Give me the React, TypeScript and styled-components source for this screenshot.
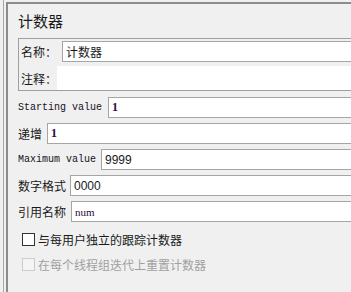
import styled, { createGlobalStyle } from "styled-components";

const GlobalStyle = createGlobalStyle`
    html, body {
        margin: 0;
        padding: 0;
        background: #f0f0f0;
        overflow: hidden;
    }
    body {
        font-family: "Liberation Sans", "Noto Sans CJK SC", sans-serif;
        font-size: 12px;
        color: #1a1a1a;
    }
`;

const Outer = styled.div`
    width: 351px;
    height: 292px;
    padding-left: 3px;
    box-sizing: border-box;
    overflow: hidden;
`;

const Frame = styled.div`
    height: 100%;
    border-left: 1px solid #a8a8a8;
    padding: 2px 0 0 2px;
    margin-right: -60px;
`;

const Panel = styled.div`
    height: 100%;
    box-sizing: border-box;
    border-left: 2px solid #8c8c8c;
    border-top: 2px solid #8c8c8c;
    padding: 0 0 0 10px;
    display: flex;
    flex-direction: column;
`;

const Title = styled.div`
    font-family: "Noto Sans CJK SC", sans-serif;
    font-size: 15px;
    line-height: 26px;
    margin: 4px 0 4px;
`;

const Group = styled.div`
    border: 1px solid #a0a0a0;
    padding: 1px 0 0 1px;
    display: flex;
    flex-direction: column;
    gap: 4px;
`;

const GroupRow = styled.div<{ $tall?: boolean }>`
    display: flex;
    align-items: center;
    height: ${(p) => (p.$tall ? "24px" : "22px")};
`;

const GroupLabel = styled.span`
    font-family: "Noto Sans CJK SC", sans-serif;
    width: 36px;
    padding-left: 1px;
    flex-shrink: 0;
`;

const Field = styled.div<{ $serif?: boolean; $small?: boolean; $gap?: number }>`
    flex: 1;
    height: 21px;
    box-sizing: border-box;
    background: #fff;
    border: 1px solid #a5a5a5;
    border-right: none;
    margin-left: ${(p) => p.$gap ?? 5}px;
    padding-left: 3px;
    display: flex;
    align-items: center;
    font-family: ${(p) => (p.$serif ? '"Liberation Serif", serif' : '"Liberation Sans", "Noto Sans CJK SC", sans-serif')};
    font-size: ${(p) => (p.$small ? "11px" : "12px")};
    font-weight: ${(p) => (p.$serif && !p.$small ? "bold" : "normal")};
    color: ${(p) => (p.$serif ? "#2a0a40" : "#1a1a1a")};
`;

const TextArea = styled.div`
    flex: 1;
    align-self: stretch;
    background: #fff;
`;

const Rows = styled.div`
    display: flex;
    flex-direction: column;
    gap: 5px;
    margin-top: 6px;
`;

const Row = styled.div`
    display: flex;
    align-items: center;
    height: 21px;
`;

const Label = styled.span<{ $mono?: boolean }>`
    font-family: ${(p) => (p.$mono ? '"Liberation Mono", monospace' : '"Noto Sans CJK SC", sans-serif')};
    font-size: ${(p) => (p.$mono ? "10px" : "12px")};
    color: ${(p) => (p.$mono ? "#14101e" : "#1a1a1a")};
    white-space: pre;
`;

const Checks = styled.div`
    display: flex;
    flex-direction: column;
    gap: 9px;
    margin-top: 9px;
    padding-left: 4px;
`;

const CheckRow = styled.label<{ $disabled?: boolean }>`
    display: flex;
    align-items: center;
    gap: 3px;
    height: 16px;
    font-family: "Noto Sans CJK SC", sans-serif;
    font-size: 12px;
    color: ${(p) => (p.$disabled ? "#a0a0a0" : "#1a1a1a")};
`;

const Box = styled.span<{ $disabled?: boolean }>`
    width: 13px;
    height: 13px;
    box-sizing: border-box;
    border: 1px solid ${(p) => (p.$disabled ? "#cccccc" : "#333333")};
    background: ${(p) => (p.$disabled ? "#f4f4f4" : "#ffffff")};
`;

export default function App() {
    return (
        <Outer>
            <GlobalStyle />
            <Frame>
                <Panel>
                    <Title>计数器</Title>
                    <Group>
                        <GroupRow>
                            <GroupLabel>名称：</GroupLabel>
                            <Field>计数器</Field>
                        </GroupRow>
                        <GroupRow $tall>
                            <GroupLabel>注释：</GroupLabel>
                            <TextArea />
                        </GroupRow>
                    </Group>
                    <Rows>
                        <Row>
                            <Label $mono>Starting value</Label>
                            <Field $serif $gap={6}>1</Field>
                        </Row>
                        <Row>
                            <Label>递增</Label>
                            <Field $serif>1</Field>
                        </Row>
                        <Row>
                            <Label $mono>Maximum value</Label>
                            <Field $gap={5}>9999</Field>
                        </Row>
                        <Row>
                            <Label>数字格式</Label>
                            <Field $gap={4}>0000</Field>
                        </Row>
                        <Row>
                            <Label>引用名称</Label>
                            <Field $serif $small>num</Field>
                        </Row>
                    </Rows>
                    <Checks>
                        <CheckRow>
                            <Box />
                            与每用户独立的跟踪计数器
                        </CheckRow>
                        <CheckRow $disabled>
                            <Box $disabled />
                            在每个线程组迭代上重置计数器
                        </CheckRow>
                    </Checks>
                </Panel>
            </Frame>
        </Outer>
    );
}
